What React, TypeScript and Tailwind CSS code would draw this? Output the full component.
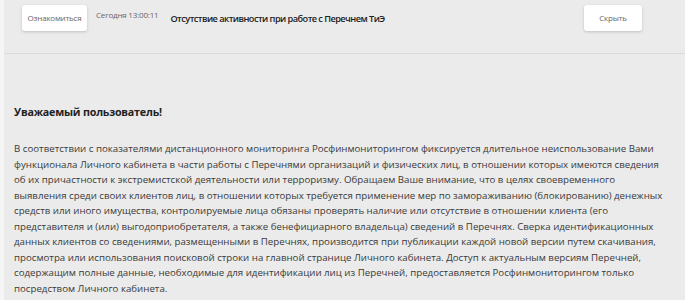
import React from 'react';

const lines = [
    'В соответствии с показателями дистанционного мониторинга Росфинмониторингом фиксируется длительное неиспользование Вами',
    'функционала Личного кабинета в части работы с Перечнями организаций и физических лиц, в отношении которых имеются сведения',
    'об их причастности к экстремистской деятельности или терроризму. Обращаем Ваше внимание, что в целях своевременного',
    'выявления среди своих клиентов лиц, в отношении которых требуется применение мер по замораживанию (блокированию) денежных',
    'средств или иного имущества, контролируемые лица обязаны проверять наличие или отсутствие в отношении клиента (его',
    'представителя и (или) выгодоприобретателя, а также бенефициарного владельца) сведений в Перечнях. Сверка идентификационных',
    'данных клиентов со сведениями, размещенными в Перечнях, производится при публикации каждой новой версии путем скачивания,',
    'просмотра или использования поисковой строки на главной странице Личного кабинета. Доступ к актуальным версиям Перечней,',
    'содержащим полные данные, необходимые для идентификации лиц из Перечней, предоставляется Росфинмониторингом только',
    'посредством Личного кабинета.',
];

const App = () => {
    return (
        <div className="w-[685px] h-[300px] overflow-hidden bg-[#f5f5f5] pl-[4px] font-['Open_Sans',sans-serif]">
            <div className="h-full bg-[#ebebeb]">
                <div className="h-[54px] border-b border-[#dcdcdc] flex items-start pt-[5px] pl-[18px] pr-[43px]">
                    <button className="w-[65px] h-[26px] bg-white rounded-[3px] shadow-[0_1px_3px_rgba(0,0,0,0.18)] text-[8px] text-[#666] tracking-[-0.2px]">
                        Ознакомиться
                    </button>
                    <span className="ml-[9px] mt-[4px] text-[8px] text-[#666] tracking-[-0.2px]">Сегодня 13:00:11</span>
                    <span className="ml-[12px] mt-[7px] text-[9.2px] font-semibold text-[#222] tracking-[-0.55px]">
                        Отсутствие активности при работе с Перечнем ТиЭ
                    </span>
                    <button className="ml-auto w-[58px] h-[26px] bg-white rounded-[3px] shadow-[0_1px_3px_rgba(0,0,0,0.18)] text-[8px] text-[#666] tracking-[-0.2px]">
                        Скрыть
                    </button>
                </div>
                <div className="pl-[10px] pt-[51px]">
                    <h2 className="text-[10.7px] font-bold text-[#222] leading-[14px] tracking-[-0.2px]">Уважаемый пользователь!</h2>
                    <div className="mt-[22px] text-[9.7px] leading-[15.5px] text-[#3a3a3a] whitespace-nowrap">
                        {lines.map((line) => (
                            <div key={line}>{line}</div>
                        ))}
                    </div>
                </div>
            </div>
        </div>
    );
};

export default App;
